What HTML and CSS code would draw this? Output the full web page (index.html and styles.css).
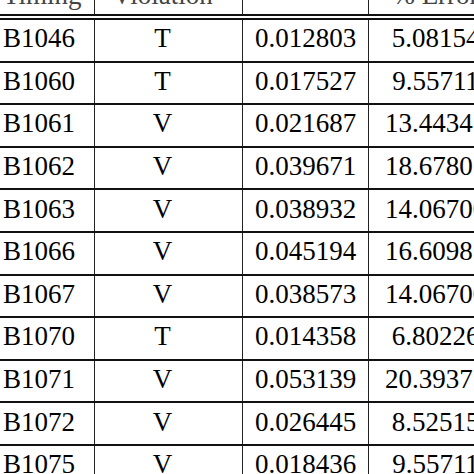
FILE: index.html
```html
<!DOCTYPE html>
<html>
<head>
<meta charset="utf-8">
<link rel="stylesheet" href="styles.css">
</head>
<body>
<div class="table">
  <div class="row head">
    <div class="c c1">Timing</div>
    <div class="c c2">Violation</div>
    <div class="c c3"></div>
    <div class="c c4">% Error</div>
  </div>
  <div class="row"><div class="c c1">B1046</div><div class="c c2">T</div><div class="c c3">0.012803</div><div class="c c4">5.08154</div></div>
  <div class="row"><div class="c c1">B1060</div><div class="c c2">T</div><div class="c c3">0.017527</div><div class="c c4">9.55711</div></div>
  <div class="row"><div class="c c1">B1061</div><div class="c c2">V</div><div class="c c3">0.021687</div><div class="c c4">13.44347</div></div>
  <div class="row"><div class="c c1">B1062</div><div class="c c2">V</div><div class="c c3">0.039671</div><div class="c c4">18.67801</div></div>
  <div class="row"><div class="c c1">B1063</div><div class="c c2">V</div><div class="c c3">0.038932</div><div class="c c4">14.06700</div></div>
  <div class="row"><div class="c c1">B1066</div><div class="c c2">V</div><div class="c c3">0.045194</div><div class="c c4">16.60985</div></div>
  <div class="row"><div class="c c1">B1067</div><div class="c c2">V</div><div class="c c3">0.038573</div><div class="c c4">14.06700</div></div>
  <div class="row"><div class="c c1">B1070</div><div class="c c2">T</div><div class="c c3">0.014358</div><div class="c c4">6.80226</div></div>
  <div class="row"><div class="c c1">B1071</div><div class="c c2">V</div><div class="c c3">0.053139</div><div class="c c4">20.39375</div></div>
  <div class="row"><div class="c c1">B1072</div><div class="c c2">V</div><div class="c c3">0.026445</div><div class="c c4">8.52515</div></div>
  <div class="row"><div class="c c1">B1075</div><div class="c c2">V</div><div class="c c3">0.018436</div><div class="c c4">9.55711</div></div>
</div>
</body>
</html>
```
FILE: styles.css
```css
html, body {
  margin: 0;
  padding: 0;
  background: #fff;
  overflow: hidden;
}
body {
  width: 474px;
  height: 474px;
  font-family: "Liberation Serif", "Times New Roman", serif;
  font-size: 27px;
  color: #000;
}
.table {
  margin-top: -22.6px;
  width: 530px;
}
.row {
  display: grid;
  grid-template-columns: 95px 148px 126px 134px;
  height: 42.6px;
  box-sizing: border-box;
  border-bottom: 2px solid #111;
}
.row.head {
  border-bottom: 6px double #111;
}
.c {
  display: flex;
  align-items: center;
  border-right: 1px solid #222;
  padding-bottom: 3px;
  box-sizing: border-box;
  white-space: nowrap;
}
.c1 {
  justify-content: flex-start;
  padding-left: 3px;
}
.c2 {
  justify-content: center;
  padding-right: 12px;
}
.c3, .c4 {
  justify-content: center;
}
.head .c {
  color: #444;
  padding-bottom: 0;
}
```
